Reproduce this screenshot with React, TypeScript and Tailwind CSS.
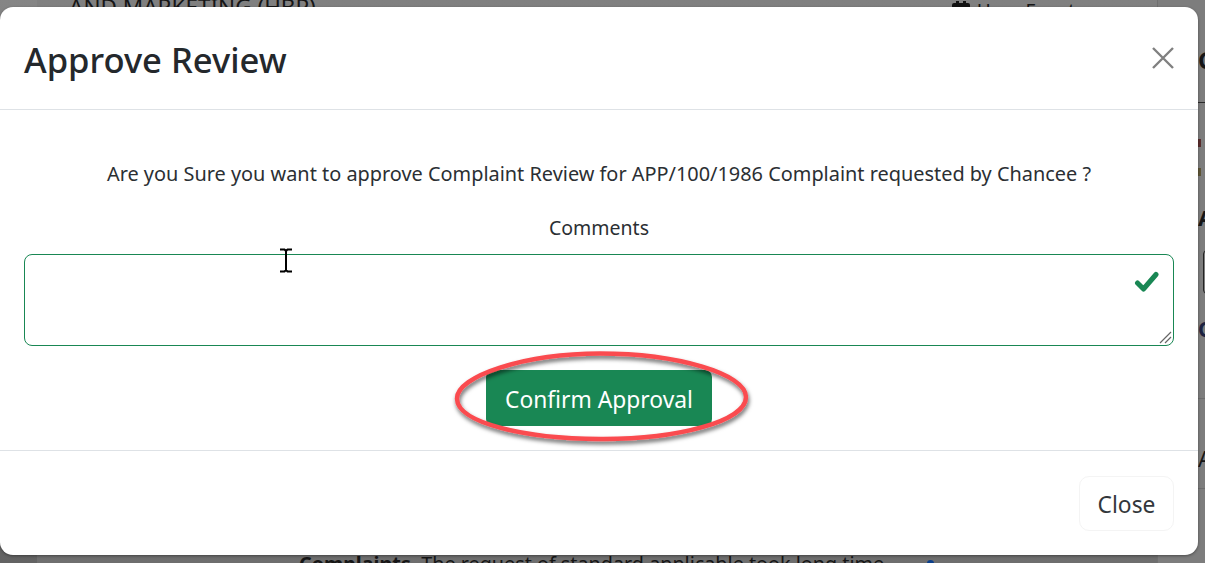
import React from "react";

function Backdrop() {
  return (
    <div className="absolute inset-0 flex text-[#161616] font-['Noto_Sans',sans-serif]">
      <div className="w-[37px] h-full bg-linear-to-b from-[#858585] to-[#636363]" />
      <div className="w-[43px] h-full bg-linear-to-b from-[#808080] to-[#6f6f6f]" />
      <div className="w-[1077px] h-full flex flex-col justify-between bg-linear-to-b from-[#808080] to-[#6e6e6e]">
        <div className="flex justify-between items-start -mt-[8px] pr-[82px]">
          <span className="-ml-[11px] text-[22.5px] leading-[30px] whitespace-nowrap">AND MARKETING (HBP)</span>
          <span className="mt-[6px] flex items-center gap-[6px] text-[19px] leading-[26px] whitespace-nowrap">
            <svg width="20" height="22" viewBox="0 0 20 22" fill="#111">
              <path d="M1 5a2 2 0 0 1 2-2h2V1h3v2h4V1h3v2h2a2 2 0 0 1 2 2v15a2 2 0 0 1-2 2H3a2 2 0 0 1-2-2Z" />
            </svg>
            Hero Event
          </span>
        </div>
        <div className="flex items-start -mb-[14px] pl-[219px] text-[19.8px] leading-[26px] whitespace-nowrap">
          <span><b>Complaints</b>&nbsp; The request of standard applicable took long time</span>
          <span className="ml-[43px] mt-[9px] h-[7px] w-[7px] rounded-full bg-[#0b3f8a]" />
        </div>
      </div>
      <div className="flex-1 h-full border-l border-[#707070] bg-[#7d7d7d] flex flex-col pl-[40px] overflow-hidden">
        <span className="mt-[45px] font-bold text-[24px] leading-[30px]">Co</span>
        <span className="mt-[27px] h-[1px] w-[8px] bg-[#2a2a2a] shrink-0" />
        <span className="mt-[36px] h-[8px] w-[3px] bg-[#5a2d2d] shrink-0" />
        <span className="mt-[21px] h-[8px] w-[3px] bg-[#5f5636] shrink-0" />
        <span className="mt-[26px] font-bold text-[22px] leading-[30px]">At</span>
        <span className="mt-[18px] ml-[5px] w-[7px] h-[44px] rounded-l-[4px] border border-[#222] shrink-0" />
        <span className="mt-[22px] font-bold text-[21px] leading-[26px] text-[#1c2240]">O</span>
        <span className="mt-[56px] h-px w-[10px] bg-[#6d6d6d] shrink-0" />
        <span className="mt-[46px] text-[22px] leading-[26px]">Ac</span>
        <span className="mt-[17px] h-px w-[10px] bg-[#6d6d6d] shrink-0" />
      </div>
    </div>
  );
}

function Annotation() {
  return (
    <svg className="absolute left-[440px] top-[340px]" width="330" height="115" viewBox="0 0 330 115" fill="none">
      <defs>
        <filter id="s" x="-10%" y="-20%" width="120%" height="150%">
          <feDropShadow dx="1" dy="3" stdDeviation="2" floodColor="#000" floodOpacity="0.6" />
        </filter>
      </defs>
      <path
        d="M17 59 C16 36 85 13.5 160 13.5 C238 13.5 306 34 306 57 C306 81 238 99.5 160 99 C85 98.5 18 83 17 59 Z"
        stroke="#fa4b50"
        strokeWidth="4.5"
        filter="url(#s)"
      />
    </svg>
  );
}

function Cursor() {
  return (
    <svg className="absolute left-[279px] top-[248px]" width="14" height="25" viewBox="0 0 14 25" fill="none" stroke="#000" strokeWidth="2">
      <path d="M1 1.5H5.5L7 3L8.5 1.5H13M7 3V22M1 23.5H5.5L7 22L8.5 23.5H13" />
    </svg>
  );
}

export default function App() {
  return (
    <div className="relative w-[1205px] h-[563px] overflow-hidden font-['Noto_Sans',sans-serif]">
      <Backdrop />
      <div className="absolute left-0 top-[7px] w-[1198px] h-[548px] bg-white rounded-[13px] flex flex-col text-[#212529] shadow-[0_1px_3px_rgba(0,0,0,0.4)]">
        <div className="h-[103px] shrink-0 border-b border-[#dee2e6] flex items-center justify-between pl-[24px] pr-[23px]">
          <h2 className="text-[34.6px] leading-[40px] font-medium mt-[3px] text-[#24282c]">Approve Review</h2>
          <svg width="24" height="24" viewBox="0 0 24 24" fill="none" stroke="#808080" strokeWidth="2.4" className="mb-[1px]">
            <path d="M2 2L22 22M22 2L2 22" />
          </svg>
        </div>
        <div className="flex-1 flex flex-col items-center px-[24px]">
          <p className="mt-[50px] text-[19.9px] leading-[28px] text-center whitespace-nowrap text-[#2b2f33]">
            Are you Sure you want to approve Complaint Review for APP/100/1986 Complaint requested by Chancee ?
          </p>
          <label className="mt-[26px] text-[19.5px] leading-[28px] text-[#2b2f33]">Comments</label>
          <div className="relative mt-[12px] w-full h-[92px] rounded-[8px] border border-[#198754] bg-white">
            <svg className="absolute right-[14px] top-[15px]" width="26" height="24" viewBox="0 0 26 24" fill="none" stroke="#198754" strokeWidth="5" strokeLinecap="round" strokeLinejoin="round">
              <path d="M4.5 13L10.5 19L23 4.5" />
            </svg>
            <svg className="absolute right-0 bottom-0" width="15" height="15" viewBox="0 0 15 15" fill="none" stroke="#666" strokeWidth="1.2">
              <path d="M2 13L13 2M7 13L13 7" />
            </svg>
          </div>
          <button className="mt-[24px] w-[226px] h-[56px] rounded-[7px] bg-[#198754] text-white text-[22.8px] leading-none pt-[4px]">
            Confirm Approval
          </button>
        </div>
        <div className="h-[105px] shrink-0 border-t border-[#dee2e6] flex items-start justify-end pt-[25px] pr-[24px]">
          <button className="w-[95px] h-[55px] rounded-[10px] border border-[#f4f4f4] bg-white text-[22.8px] text-[#33373b] leading-none pt-[4px]">Close</button>
        </div>
      </div>
      <Annotation />
      <Cursor />
    </div>
  );
}
